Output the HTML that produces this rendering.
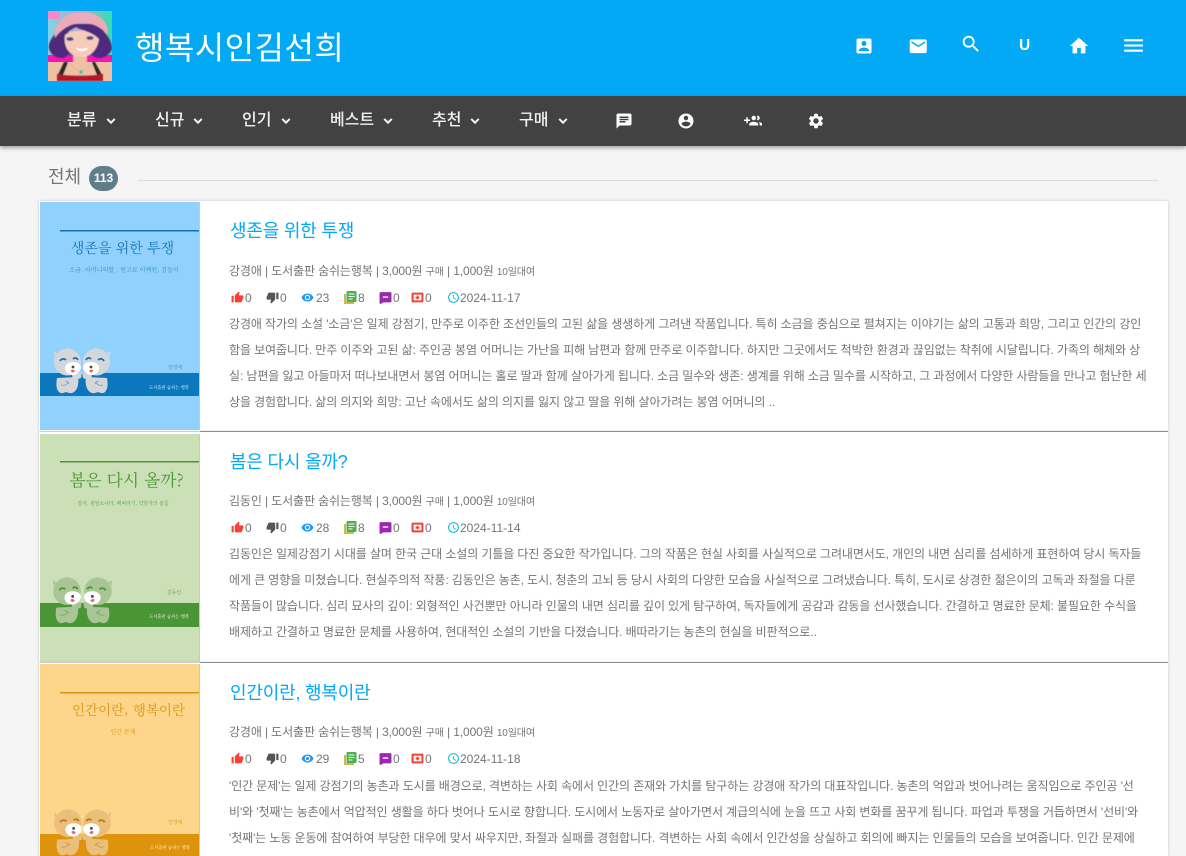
<!DOCTYPE html>
<html lang="ko"><head><meta charset="utf-8"><title>행복시인김선희</title>
<style>
html,body{margin:0;padding:0;width:1186px;height:856px;overflow:hidden;background:#f5f5f5}
body{position:relative;font-family:"Liberation Sans","Noto Sans CJK KR",sans-serif;color:#757575}
.a{position:absolute;white-space:nowrap}
#hd{position:absolute;left:0;top:0;width:1186px;height:96px;background:#03a9f4}
#nv{position:absolute;left:0;top:96px;width:1186px;height:50px;background:#424242;box-shadow:0 2px 4px rgba(0,0,0,.35)}
.n{position:absolute;top:0;line-height:49px;font-size:16px;font-weight:500;color:#f2f2f2;white-space:nowrap}
.cv{stroke:#f2f2f2;stroke-width:1}
svg{position:absolute;display:block}
.card{position:absolute;left:39px;width:1129px;background:#fff;box-shadow:0 0 3px rgba(0,0,0,.2)}
.t{position:absolute;left:191px;font-size:18px;line-height:24px;letter-spacing:-.2px;color:#03a9f4;white-space:nowrap}
.m{position:absolute;left:190px;font-size:12px;line-height:18px;letter-spacing:-.12px;color:#757575;white-space:nowrap}
.m small{font-size:10px}
.s{position:absolute;font-size:12px;line-height:18px;color:#757575;white-space:nowrap}
.d{position:absolute;left:190px;font-size:12px;line-height:26px;letter-spacing:-.1px;color:#757575;white-space:nowrap}
.hr{position:absolute;left:161px;right:0;height:1px;background:#999}
.ser{font-family:"Noto Serif CJK SC","Noto Serif CJK KR","Liberation Serif",serif}
</style></head><body>
<svg width="0" height="0" style="position:absolute">
<defs>
<symbol id="bear" viewBox="0 0 30 46">
<path d="M5 30c-1 6-1 11 2 14 2 2 5 1 7 0 2 1 6 2 8 0 4-3 5-9 4-15z" style="fill:var(--b)"/>
<path d="M20 27l10-3-1 6-8 3z" style="fill:var(--b)"/>
<circle cx="15.500" cy="14" r="13.500" style="fill:var(--b)"/>
<path d="M5 5L2 3l0 6zM12 2l5-2 2 3z" style="fill:var(--b)"/>
<path d="M13 20c0-3 3-6 8-6 4 0 8 2 8 5 0 4-4 8-8 8-5 0-8-3-8-7z" style="fill:var(--f)"/>
<path d="M8 13c1-2 4-3 6-1M21 11c2-2 4-1 5 1" fill="none" stroke-width="1.800" style="stroke:var(--e)"/>
<circle cx="21" cy="19" r="1.400" fill="#4a4a4a"/>
<path d="M19 22c2-1 3 0 4 1-1 2-3 2-4 0z" fill="#e8606a"/>
<path d="M9 37c3 1 6 0 7-3M13 33c2 0 4 1 4 3" fill="none" stroke-width=".8" style="stroke:var(--e)" opacity=".55"/>
<path d="M1 36c-1 2 0 4 1 5" fill="none" stroke-width=".8" style="stroke:var(--e)" opacity=".4"/>
</symbol>
<g id="up"><path d="M1 21h4V9H1v12zm22-11c0-1.100-.9-2-2-2h-6.310l.95-4.570.03-.32c0-.41-.17-.79-.44-1.060L14.170 1 7.590 7.590C7.220 7.950 7 8.450 7 9v10c0 1.100.9 2 2 2h9c.83 0 1.540-.5 1.840-1.220l3.020-7.050c.09-.23.14-.47.14-.73v-2z"/></g>
<g id="dn"><path d="M15 3H6c-.83 0-1.540.5-1.840 1.220l-3.020 7.050c-.09.23-.14.47-.14.73v2c0 1.100.9 2 2 2h6.310l-.95 4.570-.03.32c0 .41.17.79.44 1.060L9.830 23l6.590-6.590c.36-.36.58-.86.58-1.410V5c0-1.100-.9-2-2-2zm4 0v12h4V3h-4z"/></g>
<g id="eye"><path d="M12 4.500C7 4.500 2.730 7.610 1 12c1.730 4.390 6 7.500 11 7.500s9.270-3.110 11-7.500c-1.730-4.390-6-7.500-11-7.500zM12 17c-2.760 0-5-2.240-5-5s2.240-5 5-5 5 2.240 5 5-2.240 5-5 5zm0-8c-1.660 0-3 1.340-3 3s1.340 3 3 3 3-1.340 3-3-1.340-3-3-3z"/></g>
<g id="clk"><path d="M11.990 2C6.470 2 2 6.480 2 12s4.470 10 9.990 10C17.520 22 22 17.520 22 12S17.520 2 11.990 2zM12 20c-4.420 0-8-3.580-8-8s3.580-8 8-8 8 3.580 8 8-3.580 8-8 8zm.5-13H11v6l5.250 3.150.75-1.230-4.500-2.670z"/></g>
<g id="chev"><path class="cv" d="M7.410 8.590L12 13.170l4.590-4.580L18 10l-6 6-6-6z"/></g>
<g id="pur"><path d="M3 2h18a2 2 0 0 1 2 2v15a2 2 0 0 1-2 2H8l-5 3a2 2 0 0 1-2-2V4a2 2 0 0 1 2-2zM7 10v2.500h10V10z" fill-rule="evenodd"/></g>
<g id="redb"><path d="M3 3h18a2 2 0 0 1 2 2v14a2 2 0 0 1-2 2H3a2 2 0 0 1-2-2V5a2 2 0 0 1 2-2zM5 7v10h14V7z" fill="#f44336" fill-rule="evenodd"/><rect x="5" y="7" width="14" height="10" fill="#fff"/><path d="M12 8.500v7M8.500 12h7" stroke="#f44336" stroke-width="3"/></g>
<g id="lib"><path d="M0 3h2v8h8v2H0z" fill="#d8b54a"/><rect x="2.500" y="0" width="10" height="11" rx="1" fill="#4caf50"/><path d="M4.500 3h6M4.500 5.500h6M4.500 8h4" stroke="#fff"/></g>
</defs></svg>

<div id="hd">
<svg style="left:48px;top:11px" width="64" height="70" viewBox="0 0 64 70">
<defs><linearGradient id="bg" x1="0" y1="0" x2="1" y2="0"><stop offset="0" stop-color="#7fd4e8"/><stop offset=".5" stop-color="#b9a6d0"/><stop offset="1" stop-color="#2fe0b0"/></linearGradient><filter id="bl" x="-10%" y="-10%" width="120%" height="120%"><feGaussianBlur stdDeviation=".6"/></filter></defs>
<rect width="64" height="70" fill="url(#bg)"/>
<rect width="12" height="8" fill="#f78ac6"/>
<rect y="44" width="64" height="8" fill="#f515b5"/>
<rect y="51" width="64" height="19" fill="#eec0a4"/>
<g filter="url(#bl)">
<path d="M16 51L9 66h5l6-15zM47 51l8 15h-5l-6-15z" fill="#2b2524"/>
<path d="M9 70V63c2 0 4 0 6 1 10 1 24 1 34 0 2-1 4-1 6-1v7z" fill="#b3152c"/>
<path d="M25 44h14v7l-7 4-7-4z" fill="#eec0a4"/>
<path d="M8 22C3 27 0 33 1 38c2 6 7 9 13 9 3 0 5-2 6-3h24c2 2 4 3 7 3 6 0 11-4 13-9 0-6-3-12-8-17z" fill="#4f2a7c"/>
<path d="M17 24c-2 10 3 22 17 22 11 0 18-12 17-22-7-6-27-6-34 0z" fill="#f4ccb8"/>
<path d="M13 33c1-7 6-13 15-17 7 4 17 5 24 13l4-9-6-7H18l-8 5z" fill="#4f2a7c"/>
<path d="M7 27C5 12 18 1 34 1s27 9 26 23c-8-9-16-12-26-12S14 17 7 27z" fill="#ecabb8"/>
<ellipse cx="22" cy="28" rx="3.600" ry="1.900" fill="#4a4a96"/><ellipse cx="42" cy="27" rx="3.600" ry="1.900" fill="#4a4a96"/>
<path d="M28 37c4 1.200 8 1.200 12-.5-1 3-3 3.500-6 3.500s-5-.5-6-3z" fill="#fff"/>
<path d="M22 52c3 5 7 7 11 8 4-1 8-4 10-8" fill="none" stroke="#d9b48c" stroke-width=".7"/>
<circle cx="33" cy="61" r="1.600" fill="#1ec7b5"/>
</g>
</svg>
<div class="a" style="left:135px;top:25px;font-size:32px;line-height:46px;letter-spacing:.45px;color:#fff">행복시인김선희</div>
<svg style="left:854px;top:36px" width="20" height="20" viewBox="0 0 24 24" fill="#fff"><path d="M3 5v14c0 1.100.89 2 2 2h14c1.100 0 2-.9 2-2V5c0-1.100-.9-2-2-2H5c-1.110 0-2 .9-2 2zm12 4c0 1.660-1.340 3-3 3s-3-1.340-3-3 1.340-3 3-3 3 1.340 3 3zm-9 8c0-2 4-3.100 6-3.100s6 1.100 6 3.100v1H6v-1z"/></svg>
<svg style="left:908px;top:36px" width="20.500" height="20.500" viewBox="0 0 24 24" fill="#fff"><path d="M20 4H4c-1.100 0-1.990.9-1.990 2L2 18c0 1.100.9 2 2 2h16c1.100 0 2-.9 2-2V6c0-1.100-.9-2-2-2zm0 4l-8 5-8-5V6l8 5 8-5v2z"/></svg>
<svg style="left:960px;top:33px" width="22" height="22" viewBox="0 0 24 24" fill="#fff"><path d="M15.500 14h-.79l-.28-.27C15.410 12.590 16 11.110 16 9.500 16 5.910 13.090 3 9.500 3S3 5.910 3 9.500 5.910 16 9.500 16c1.610 0 3.090-.59 4.230-1.570l.27.28v.79l5 4.990L20.490 19l-4.990-5zm-6 0C7.010 14 5 11.990 5 9.500S7.010 5 9.500 5 14 7.010 14 9.500 11.990 14 9.500 14z"/></svg>
<div class="a" style="left:1019px;top:36px;font-size:15.500px;line-height:19px;font-weight:700;color:#fff">U</div>
<svg style="left:1068px;top:35px" width="22" height="22" viewBox="0 0 24 24" fill="#fff"><path d="M10 20v-6h4v6h5v-8h3L12 3 2 12h3v8z"/></svg>
<svg style="left:1121px;top:33px" width="25" height="25" viewBox="0 0 24 24" fill="#fff"><path d="M3 18h18v-2H3v2zm0-5h18v-2H3v2zm0-7v2h18V6H3z"/></svg>
</div>

<div id="nv">
<div class="n" style="left:67px">분류</div><svg style="left:103px;top:17px" width="16" height="16" viewBox="0 0 24 24" fill="#f2f2f2"><use href="#chev"/></svg>
<div class="n" style="left:155px">신규</div><svg style="left:190px;top:17px" width="16" height="16" viewBox="0 0 24 24" fill="#f2f2f2"><use href="#chev"/></svg>
<div class="n" style="left:242px">인기</div><svg style="left:278px;top:17px" width="16" height="16" viewBox="0 0 24 24" fill="#f2f2f2"><use href="#chev"/></svg>
<div class="n" style="left:330px">베스트</div><svg style="left:380px;top:17px" width="16" height="16" viewBox="0 0 24 24" fill="#f2f2f2"><use href="#chev"/></svg>
<div class="n" style="left:432px">추천</div><svg style="left:467px;top:17px" width="16" height="16" viewBox="0 0 24 24" fill="#f2f2f2"><use href="#chev"/></svg>
<div class="n" style="left:519px">구매</div><svg style="left:555px;top:17px" width="16" height="16" viewBox="0 0 24 24" fill="#f2f2f2"><use href="#chev"/></svg>
<svg style="left:615px;top:16px" width="18" height="18" viewBox="0 0 24 24" fill="#fff"><path d="M20 2H4c-1.100 0-1.990.9-1.990 2L2 22l4-4h14c1.100 0 2-.9 2-2V4c0-1.100-.9-2-2-2zM6 9h12v2H6V9zm8 5H6v-2h8v2zm4-6H6V6h12v2z"/></svg>
<svg style="left:677px;top:16px" width="18" height="18" viewBox="0 0 24 24" fill="#fff"><path d="M12 2C6.480 2 2 6.480 2 12s4.480 10 10 10 10-4.480 10-10S17.520 2 12 2zm0 3c1.660 0 3 1.340 3 3s-1.340 3-3 3-3-1.340-3-3 1.340-3 3-3zm0 14.200c-2.500 0-4.710-1.280-6-3.220.03-1.990 4-3.080 6-3.080s5.970 1.090 6 3.080c-1.290 1.940-3.500 3.220-6 3.220z"/></svg>
<svg style="left:744px;top:16px" width="18" height="18" viewBox="0 0 24 24" fill="#fff"><path d="M8 10H5V7H3v3H0v2h3v3h2v-3h3v-2zm10 1c1.660 0 2.990-1.340 2.990-3S19.660 5 18 5c-.32 0-.63.05-.91.14.57.81.9 1.790.9 2.860s-.34 2.040-.9 2.860c.28.09.59.14.91.14zm-5 0c1.660 0 2.990-1.340 2.990-3S14.660 5 13 5s-3 1.340-3 3 1.340 3 3 3zm6.620 2.160c.83.73 1.380 1.660 1.380 2.840v2h3v-2c0-1.540-2.370-2.490-4.380-2.840zM13 13c-2 0-6 1-6 3v2h12v-2c0-2-4-3-6-3z"/></svg>
<svg style="left:807px;top:16px" width="18" height="18" viewBox="0 0 24 24" fill="#fff"><path d="M19.140 12.940c.04-.3.060-.61.060-.94 0-.32-.02-.64-.07-.94l2.030-1.580c.18-.14.23-.41.120-.61l-1.920-3.320c-.12-.22-.37-.29-.59-.22l-2.390.96c-.5-.38-1.030-.7-1.620-.94l-.36-2.540c-.04-.24-.24-.41-.48-.41h-3.840c-.24 0-.43.17-.47.41l-.36 2.540c-.59.24-1.130.57-1.620.94l-2.390-.96c-.22-.08-.47 0-.59.22L2.740 8.870c-.12.21-.08.47.12.61l2.030 1.580c-.05.3-.09.63-.09.94s.02.64.07.94l-2.030 1.580c-.18.14-.23.41-.12.61l1.920 3.320c.12.22.37.29.59.22l2.390-.96c.5.38 1.030.7 1.620.94l.36 2.540c.05.24.24.41.48.41h3.840c.24 0 .44-.17.47-.41l.36-2.540c.59-.24 1.130-.56 1.620-.94l2.390.96c.22.08.47 0 .59-.22l1.920-3.320c.12-.22.07-.47-.12-.61l-2.010-1.580zM12 15.600c-1.980 0-3.600-1.620-3.600-3.600s1.620-3.600 3.600-3.600 3.600 1.620 3.600 3.600-1.620 3.600-3.600 3.600z"/></svg>
</div>

<div class="a" style="left:48px;top:164px;font-size:18px;line-height:26px;color:#757575">전체</div>
<div class="a" style="left:89px;top:166px;width:29px;height:25px;border-radius:13px;background:#607d8b;color:#fff;font-size:12px;font-weight:700;line-height:25px;text-align:center">113</div>
<div class="a" style="left:138px;top:180px;width:1020px;height:1px;background:#ddd"></div>

<!-- CARD 1 -->
<div class="card" style="top:201px;height:230px">
<svg style="left:1px;top:1px;--b:#d4d6da;--f:#fff;--e:#0b78bd" width="160" height="228" viewBox="0 0 160 228">
<rect width="160" height="228" fill="#90d2fd"/>
<rect x="20" y="28" width="140" height="1.500" fill="#0d73b5"/>
<rect y="171" width="160" height="23" fill="#0b78bd"/>
<use href="#bear" x="12" y="146" width="30" height="46"/>
<g transform="matrix(-1 0 0 1 84 0)"><use href="#bear" x="12" y="146" width="30" height="46"/></g>
<text class="ser" x="82.500" y="51" text-anchor="middle" font-size="14" fill="#1976b8">생존을 위한 투쟁</text>
<text class="ser" x="84" y="70" text-anchor="middle" font-size="6.100" fill="#3c8cc4">소금, 어머니의딸 , 원고료 이백원, 검둥이</text>
<text class="ser" x="135" y="167" text-anchor="middle" font-size="5" fill="#3c8cc4">강경애</text>
<text class="ser" x="129" y="187" text-anchor="middle" font-size="4.300" fill="#e3f2fc">도서출판 숨쉬는 행복</text>
<rect x="159" width="1" height="228" fill="#c8c8c8"/>
</svg>
<div class="t" style="top:18px">생존을 위한 투쟁</div>
<div class="m" style="top:61px">강경애 | 도서출판 숨쉬는행복 | 3,000원 <small>구매</small> | 1,000원 <small>10일대여</small></div>
<svg style="left:192px;top:90px" width="13" height="13" viewBox="0 0 24 24" fill="#f44336"><use href="#up"/></svg><div class="s" style="left:206px;top:88px">0</div>
<svg style="left:227px;top:90px" width="13" height="13" viewBox="0 0 24 24" fill="#555"><use href="#dn"/></svg><div class="s" style="left:241px;top:88px">0</div>
<svg style="left:262px;top:90px" width="13" height="13" viewBox="0 0 24 24" fill="#2196f3"><use href="#eye"/></svg><div class="s" style="left:277px;top:88px">23</div>
<svg style="left:305px;top:90px" width="13" height="13" viewBox="0 0 13 13"><use href="#lib"/></svg><div class="s" style="left:319px;top:88px">8</div>
<svg style="left:340px;top:90px" width="13" height="13" viewBox="0 0 24 24" fill="#9c27b0"><use href="#pur"/></svg><div class="s" style="left:354px;top:88px">0</div>
<svg style="left:372px;top:90px" width="13" height="13" viewBox="0 0 24 24"><use href="#redb"/></svg><div class="s" style="left:386px;top:88px">0</div>
<svg style="left:408px;top:90px" width="13" height="13" viewBox="0 0 24 24" fill="#00bcd4"><use href="#clk"/></svg><div class="s" style="left:421px;top:88px">2024-11-17</div>
<div class="d" style="top:110px">강경애 작가의 소설 '소금'은 일제 강점기, 만주로 이주한 조선인들의 고된 삶을 생생하게 그려낸 작품입니다. 특히 소금을 중심으로 펼쳐지는 이야기는 삶의 고통과 희망, 그리고 인간의 강인<br>함을 보여줍니다. 만주 이주와 고된 삶: 주인공 봉염 어머니는 가난을 피해 남편과 함께 만주로 이주합니다. 하지만 그곳에서도 척박한 환경과 끊임없는 착취에 시달립니다. 가족의 해체와 상<br>실: 남편을 잃고 아들마저 떠나보내면서 봉염 어머니는 홀로 딸과 함께 살아가게 됩니다. 소금 밀수와 생존: 생계를 위해 소금 밀수를 시작하고, 그 과정에서 다양한 사람들을 만나고 험난한 세<br>상을 경험합니다. 삶의 의지와 희망: 고난 속에서도 삶의 의지를 잃지 않고 딸을 위해 살아가려는 봉염 어머니의 ..</div>
<div class="hr" style="top:230px"></div>
</div>

<!-- CARD 2 -->
<div class="card" style="top:432px;height:230px">
<svg style="left:1px;top:2px;--b:#a9c596;--f:#fff;--e:#4a9636" width="160" height="228" viewBox="0 0 160 228">
<rect width="160" height="228" fill="#cce0b8"/>
<rect x="20" y="27" width="140" height="1.500" fill="#4a9636"/>
<rect y="169" width="160" height="24" fill="#4a9636"/>
<use href="#bear" x="11" y="143" width="31" height="47"/>
<g transform="matrix(-1 0 0 1 85 0)"><use href="#bear" x="11" y="143" width="31" height="47"/></g>
<text class="ser" x="86.500" y="52" text-anchor="middle" font-size="16.700" fill="#4a9636">봄은 다시 올까?</text>
<text class="ser" x="83" y="71" text-anchor="middle" font-size="4.900" fill="#5b9c47">감자, 광염소나타, 배따라기, 약한자의 슬픔</text>
<text class="ser" x="134" y="160" text-anchor="middle" font-size="5" fill="#5b9c47">김동인</text>
<text class="ser" x="129" y="184" text-anchor="middle" font-size="4.300" fill="#eef7e6">도서출판 숨쉬는 행복</text>
<rect x="159" width="1" height="228" fill="#c8c8c8"/>
</svg>
<div class="t" style="top:18px">봄은 다시 올까?</div>
<div class="m" style="top:60px">김동인 | 도서출판 숨쉬는행복 | 3,000원 <small>구매</small> | 1,000원 <small>10일대여</small></div>
<svg style="left:192px;top:89px" width="13" height="13" viewBox="0 0 24 24" fill="#f44336"><use href="#up"/></svg><div class="s" style="left:206px;top:87px">0</div>
<svg style="left:227px;top:89px" width="13" height="13" viewBox="0 0 24 24" fill="#555"><use href="#dn"/></svg><div class="s" style="left:241px;top:87px">0</div>
<svg style="left:262px;top:89px" width="13" height="13" viewBox="0 0 24 24" fill="#2196f3"><use href="#eye"/></svg><div class="s" style="left:277px;top:87px">28</div>
<svg style="left:305px;top:89px" width="13" height="13" viewBox="0 0 13 13"><use href="#lib"/></svg><div class="s" style="left:319px;top:87px">8</div>
<svg style="left:340px;top:89px" width="13" height="13" viewBox="0 0 24 24" fill="#9c27b0"><use href="#pur"/></svg><div class="s" style="left:354px;top:87px">0</div>
<svg style="left:372px;top:89px" width="13" height="13" viewBox="0 0 24 24"><use href="#redb"/></svg><div class="s" style="left:386px;top:87px">0</div>
<svg style="left:408px;top:89px" width="13" height="13" viewBox="0 0 24 24" fill="#00bcd4"><use href="#clk"/></svg><div class="s" style="left:421px;top:87px">2024-11-14</div>
<div class="d" style="top:109px">김동인은 일제강점기 시대를 살며 한국 근대 소설의 기틀을 다진 중요한 작가입니다. 그의 작품은 현실 사회를 사실적으로 그려내면서도, 개인의 내면 심리를 섬세하게 표현하여 당시 독자들<br>에게 큰 영향을 미쳤습니다. 현실주의적 작풍: 김동인은 농촌, 도시, 청춘의 고뇌 등 당시 사회의 다양한 모습을 사실적으로 그려냈습니다. 특히, 도시로 상경한 젊은이의 고독과 좌절을 다룬<br>작품들이 많습니다. 심리 묘사의 깊이: 외형적인 사건뿐만 아니라 인물의 내면 심리를 깊이 있게 탐구하여, 독자들에게 공감과 감동을 선사했습니다. 간결하고 명료한 문체: 불필요한 수식을<br>배제하고 간결하고 명료한 문체를 사용하여, 현대적인 소설의 기반을 다졌습니다. 배따라기는 농촌의 현실을 비판적으로..</div>
<div class="hr" style="top:230px"></div>
</div>

<!-- CARD 3 -->
<div class="card" style="top:663px;height:193px">
<svg style="left:1px;top:1px;--b:#eabf7c;--f:#fff;--e:#b97a10" width="160" height="192" viewBox="0 0 160 192">
<rect width="160" height="192" fill="#fdd68b"/>
<rect x="20" y="28" width="140" height="1.500" fill="#de930c"/>
<rect y="170" width="160" height="22" fill="#de930c"/>
<use href="#bear" x="12" y="145" width="31" height="47"/>
<g transform="matrix(-1 0 0 1 85 0)"><use href="#bear" x="12" y="145" width="31" height="47"/></g>
<text class="ser" x="88.500" y="51" text-anchor="middle" font-size="13.500" fill="#dc9414">인간이란, 행복이란</text>
<text class="ser" x="83" y="70" text-anchor="middle" font-size="6" fill="#dc9414">인간 문제</text>
<text class="ser" x="135" y="160" text-anchor="middle" font-size="5" fill="#dc9414">강경애</text>
<text class="ser" x="130" y="185" text-anchor="middle" font-size="4.300" fill="#fff3dc">도서출판 숨쉬는 행복</text>
<rect x="159" width="1" height="192" fill="#c8c8c8"/>
</svg>
<div class="t" style="top:18px">인간이란, 행복이란</div>
<div class="m" style="top:60px">강경애 | 도서출판 숨쉬는행복 | 3,000원 <small>구매</small> | 1,000원 <small>10일대여</small></div>
<svg style="left:192px;top:89px" width="13" height="13" viewBox="0 0 24 24" fill="#f44336"><use href="#up"/></svg><div class="s" style="left:206px;top:87px">0</div>
<svg style="left:227px;top:89px" width="13" height="13" viewBox="0 0 24 24" fill="#555"><use href="#dn"/></svg><div class="s" style="left:241px;top:87px">0</div>
<svg style="left:262px;top:89px" width="13" height="13" viewBox="0 0 24 24" fill="#2196f3"><use href="#eye"/></svg><div class="s" style="left:277px;top:87px">29</div>
<svg style="left:305px;top:89px" width="13" height="13" viewBox="0 0 13 13"><use href="#lib"/></svg><div class="s" style="left:319px;top:87px">5</div>
<svg style="left:340px;top:89px" width="13" height="13" viewBox="0 0 24 24" fill="#9c27b0"><use href="#pur"/></svg><div class="s" style="left:354px;top:87px">0</div>
<svg style="left:372px;top:89px" width="13" height="13" viewBox="0 0 24 24"><use href="#redb"/></svg><div class="s" style="left:386px;top:87px">0</div>
<svg style="left:408px;top:89px" width="13" height="13" viewBox="0 0 24 24" fill="#00bcd4"><use href="#clk"/></svg><div class="s" style="left:421px;top:87px">2024-11-18</div>
<div class="d" style="top:110px">'인간 문제'는 일제 강점기의 농촌과 도시를 배경으로, 격변하는 사회 속에서 인간의 존재와 가치를 탐구하는 강경애 작가의 대표작입니다. 농촌의 억압과 벗어나려는 움직임으로 주인공 '선<br>비'와 '첫째'는 농촌에서 억압적인 생활을 하다 벗어나 도시로 향합니다. 도시에서 노동자로 살아가면서 계급의식에 눈을 뜨고 사회 변화를 꿈꾸게 됩니다. 파업과 투쟁을 거듭하면서 '선비'와<br>'첫째'는 노동 운동에 참여하여 부당한 대우에 맞서 싸우지만, 좌절과 실패를 경험합니다. 격변하는 사회 속에서 인간성을 상실하고 회의에 빠지는 인물들의 모습을 보여줍니다. 인간 문제에</div>
</div>
</body></html>
